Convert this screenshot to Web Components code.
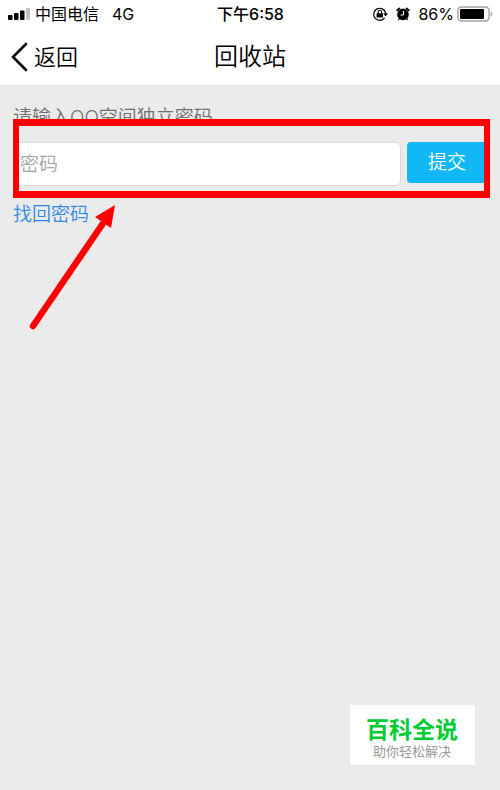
<!DOCTYPE html>
<html lang="zh-CN">
<head>
<meta charset="utf-8">
<meta name="viewport" content="width=device-width, initial-scale=1">
<title>回收站</title>
<style>
  body {
    margin: 0;
    min-height: 100vh;
    background: #ebebeb;
    color: #000;
    font-family: Inter, "Noto Sans CJK SC", sans-serif;
  }
</style>
</head>
<body>
<recycle-page>
  <status-bar slot="header" carrier="中国电信" network="4G" time="下午6:58" battery="86"></status-bar>
  <nav-bar slot="header" back="返回">回收站</nav-bar>
  <password-form>
    <span slot="label">请输入QQ空间独立密码</span>
    <span slot="submit">提交</span>
    <span slot="recover">找回密码</span>
  </password-form>
  <site-badge slot="badge">
    百科全说
    <span slot="slogan">助你轻松解决</span>
  </site-badge>
</recycle-page>

<script>
const pageTemplate = document.createElement('template');

pageTemplate.innerHTML = `
  <style>
    :host {
      display: block;
    }
    header {
      background: #fff;
    }
    .badge {
      position: fixed;
      right: 25px;
      bottom: 25px;
    }
  </style>
  <header><slot name="header"></slot></header>
  <main><slot></slot></main>
  <div class="badge"><slot name="badge"></slot></div>
`;

class RecyclePage extends HTMLElement {
    constructor() {
        super();
        this.attachShadow({mode: "open"});
        this.shadowRoot.appendChild(pageTemplate.content.cloneNode(true));
    }
}

const statusTemplate = document.createElement('template');

statusTemplate.innerHTML = `
  <style>
    :host {
      display: grid;
      grid-template-columns: 1fr auto 1fr;
      align-items: center;
      height: 28px;
      padding: 0 7px 0 8px;
      font-size: 16px;
      line-height: 24px;
      white-space: nowrap;
    }
    svg {
      display: block;
    }
    .left, .right {
      display: flex;
      align-items: center;
    }
    .left {
      gap: 5px;
    }
    .network {
      margin-left: 8px;
    }
    .time {
      font-weight: 500;
    }
    .right {
      justify-content: flex-end;
      gap: 8px;
    }
    .power {
      display: flex;
      align-items: center;
      gap: 3px;
    }
  </style>
  <div class="left">
    <svg width="22" height="12" viewBox="0 0 22 12" aria-hidden="true">
      <rect x="0" y="7" width="4.5" height="5" rx="1"/>
      <rect x="6" y="5" width="4.5" height="7" rx="1"/>
      <rect x="12" y="2.5" width="4.5" height="9.5" rx="1"/>
      <rect x="18" y="0" width="4" height="12" rx="1" fill="#c4c4c4"/>
    </svg>
    <span class="carrier"></span>
    <span class="network"></span>
  </div>
  <div class="time"></div>
  <div class="right">
    <svg width="15" height="14" viewBox="0 0 15 14" aria-hidden="true">
      <path d="M11.6 10.8A6 6 0 1 1 12.6 6" fill="none" stroke="#000" stroke-width="1.2"/>
      <path d="M10.2 6.2h4.8l-2.4 3.2z"/>
      <rect x="3.6" y="6.2" width="6.4" height="4.4" rx=".5"/>
      <path d="M5.1 6.4V5a1.7 1.7 0 0 1 3.4 0v1.4" fill="none" stroke="#000" stroke-width="1.1"/>
    </svg>
    <svg width="14" height="14" viewBox="0 0 14 14" aria-hidden="true">
      <circle cx="7" cy="7.4" r="5.8"/>
      <path d="M1.2 3.4A9 9 0 0 1 3.4 1.4M10.6 1.4A9 9 0 0 1 12.8 3.4" fill="none" stroke="#000" stroke-width="1.8" stroke-linecap="round"/>
      <path d="M3.4 11.6l-.8 1M10.6 11.6l.8 1" stroke="#000" stroke-width="1.2" stroke-linecap="round"/>
      <path d="M7.5 4v4h-3" fill="none" stroke="#fff" stroke-width="1"/>
    </svg>
    <div class="power">
      <span class="battery"></span>
      <svg width="36" height="16" viewBox="0 0 36 16" aria-hidden="true">
        <rect x="1" y="1" width="31" height="14" rx="3.5" fill="#fff" stroke="#a3a3a3" stroke-width="1.4"/>
        <rect class="level" x="3" y="3" height="10" rx="1"/>
        <path d="M33.6 5.4c2.4 1 2.4 4.2 0 5.2z" fill="#a3a3a3"/>
      </svg>
    </div>
  </div>
`;

class StatusBar extends HTMLElement {
    constructor() {
        super();
        this.attachShadow({mode: "open"});
        this.shadowRoot.appendChild(statusTemplate.content.cloneNode(true));
    }

    connectedCallback() {
        const root = this.shadowRoot;
        const battery = Number(this.getAttribute("battery"));

        root.querySelector(".carrier").textContent = this.getAttribute("carrier");
        root.querySelector(".network").textContent = this.getAttribute("network");
        root.querySelector(".time").textContent = this.getAttribute("time");
        root.querySelector(".battery").textContent = battery + "%";
        root.querySelector(".level").setAttribute("width", Math.round(28 * battery / 100));
    }
}

const navTemplate = document.createElement('template');

navTemplate.innerHTML = `
  <style>
    :host {
      display: grid;
      grid-template-columns: 1fr auto 1fr;
      align-items: center;
      height: 57px;
      padding: 0 11px;
      font-weight: 350;
    }
    button {
      display: flex;
      align-items: center;
      justify-self: start;
      gap: 6px;
      padding: 0;
      border: 0;
      background: none;
      color: inherit;
      font: inherit;
      font-size: 22px;
      line-height: 32px;
    }
    h1 {
      margin: 0;
      font-size: 24px;
      font-weight: inherit;
      line-height: 32px;
    }
  </style>
  <button type="button">
    <svg width="17" height="30" viewBox="0 0 17 30" aria-hidden="true">
      <path d="M15 2L2 15l13 13" fill="none" stroke="#000" stroke-width="2.6" stroke-linecap="round"/>
    </svg>
    <span></span>
  </button>
  <h1><slot></slot></h1>
`;

class NavBar extends HTMLElement {
    constructor() {
        super();
        this.attachShadow({mode: "open"});
        this.shadowRoot.appendChild(navTemplate.content.cloneNode(true));
    }

    connectedCallback() {
        const button = this.shadowRoot.querySelector("button");

        button.querySelector("span").textContent = this.getAttribute("back");
        button.addEventListener("click", () => history.back());
    }
}

const formTemplate = document.createElement('template');

formTemplate.innerHTML = `
  <style>
    :host {
      display: block;
      position: relative;
      padding: 19px 13px;
      font-size: 19px;
      font-weight: 350;
      line-height: 28px;
    }
    label {
      display: block;
      color: #707070;
    }
    form {
      display: flex;
      align-items: flex-start;
      gap: 6px;
      margin: 10px 0 15px;
    }
    input {
      flex: 1;
      min-width: 0;
      height: 44px;
      box-sizing: border-box;
      padding: 0 6px;
      border: 1px solid #dcdcdc;
      border-radius: 5px;
      background: #fff;
      color: #000;
      font: inherit;
    }
    input::placeholder {
      color: #a4a4a4;
      opacity: 1;
    }
    form button {
      height: 41px;
      padding: 0 21px;
      border: 0;
      border-radius: 4px;
      background: #12b7f5;
      color: #fff;
      font: inherit;
    }
    a {
      color: #3089e6;
      text-decoration: none;
    }
    /* red frame and arrow drawn over the form */
    .frame {
      position: absolute;
      top: 34px;
      left: 13px;
      right: 10px;
      height: 79px;
      box-sizing: border-box;
      border: solid #f00;
      border-width: 7px 6px;
      pointer-events: none;
    }
    .arrow {
      position: absolute;
      top: 119px;
      left: 28px;
      pointer-events: none;
    }
  </style>
  <label for="password"><slot name="label"></slot></label>
  <form>
    <input id="password" type="password" placeholder="密码">
    <button type="submit"><slot name="submit"></slot></button>
  </form>
  <a href="#recover"><slot name="recover"></slot></a>
  <div class="frame"></div>
  <svg class="arrow" width="90" height="128" viewBox="0 0 90 128" fill="#f00" aria-hidden="true">
    <path d="M5 122L78 15" stroke="#f00" stroke-width="6.5" stroke-linecap="round"/>
    <path d="M87 1L67 13l16 11z"/>
  </svg>
`;

class PasswordForm extends HTMLElement {
    constructor() {
        super();
        this.attachShadow({mode: "open"});
        this.shadowRoot.appendChild(formTemplate.content.cloneNode(true));
    }

    connectedCallback() {
        this.shadowRoot.querySelector("form").addEventListener("submit", (event) => {
            event.preventDefault();
        });
    }
}

const badgeTemplate = document.createElement('template');

badgeTemplate.innerHTML = `
  <style>
    :host {
      display: block;
      padding: 12px 17px 5px 16px;
      background: #fff;
      text-align: center;
      white-space: nowrap;
    }
    strong {
      display: block;
      color: #0c3;
      font-size: 23px;
      font-weight: 700;
      line-height: 26px;
    }
    small {
      display: block;
      color: #999;
      font-size: 13px;
      line-height: 17px;
    }
  </style>
  <strong><slot></slot></strong>
  <small><slot name="slogan"></slot></small>
`;

class SiteBadge extends HTMLElement {
    constructor() {
        super();
        this.attachShadow({mode: "open"});
        this.shadowRoot.appendChild(badgeTemplate.content.cloneNode(true));
    }
}

customElements.define("recycle-page", RecyclePage);
customElements.define("status-bar", StatusBar);
customElements.define("nav-bar", NavBar);
customElements.define("password-form", PasswordForm);
customElements.define("site-badge", SiteBadge);
</script>
</body>
</html>
